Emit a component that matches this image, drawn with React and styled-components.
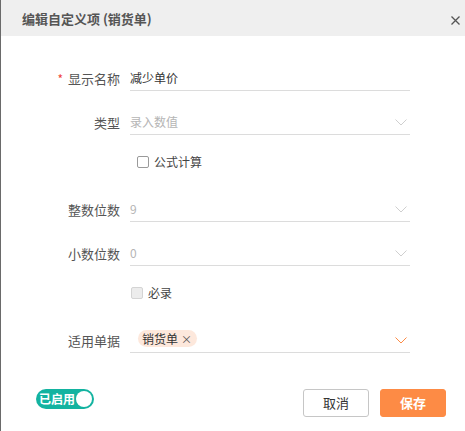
import React from 'react';
import styled, { createGlobalStyle } from 'styled-components';

const GlobalStyle = createGlobalStyle`
  html, body {
    margin: 0;
    padding: 0;
    background: #fff;
  }
  body {
    font-family: "Noto Sans CJK SC", "Noto Sans", sans-serif;
  }
`;

const Dialog = styled.div`
  width: 465px;
  height: 431px;
  box-sizing: border-box;
  border-left: 1px solid #6a6a6a;
  display: flex;
  flex-direction: column;
  background: #fff;
`;

const Header = styled.div`
  height: 36px;
  flex: none;
  display: flex;
  align-items: center;
  justify-content: space-between;
  padding: 0 5px 0 21px;
  background: #efefef;
`;

const Title = styled.div`
  font-size: 13px;
  font-weight: 700;
  color: #555;
  line-height: 18px;
  padding-top: 2px;
`;

const Close = styled.button`
  border: 0;
  background: none;
  padding: 0;
  width: 9px;
  height: 9px;
  display: flex;
  margin-top: 4px;
  cursor: pointer;
`;

const Form = styled.div`
  display: flex;
  flex-direction: column;
  gap: 20px;
  padding: 30px 0 37px;
`;

const Row = styled.div`
  display: grid;
  grid-template-columns: 119px 280px;
  column-gap: 10px;
  align-items: center;
  height: 24px;
`;

const Label = styled.div`
  text-align: right;
  font-size: 13px;
  color: #555;
  line-height: 24px;
  padding-top: 1px;
`;

const Required = styled.span`
  color: #f0443a;
  font-size: 12px;
  margin-right: 5px;
`;

const Field = styled.div`
  height: 24px;
  box-sizing: border-box;
  border-bottom: 1px solid #dcdcdc;
  display: flex;
  align-items: center;
  justify-content: space-between;
  font-size: 12px;
  line-height: 16px;
  color: ${p => (p.muted ? '#b5b5b5' : '#333')};
  padding-right: 3px;
`;

const CheckRow = styled.label`
  display: flex;
  align-items: center;
  gap: 5px;
  height: 16px;
  line-height: 16px;
  margin-bottom: 7px;
  padding-left: ${p => p.indent}px;
  font-size: 12px;
  color: #444;
`;

const Box = styled.span`
  flex: none;
  width: 12px;
  height: 12px;
  box-sizing: border-box;
  border-radius: 2px;
  border: 1px solid ${p => (p.disabled ? '#d4d4d4' : '#9a9a9a')};
  background: ${p => (p.disabled ? '#ececec' : '#fff')};
`;

const Tag = styled.span`
  display: inline-flex;
  align-items: center;
  gap: 3px;
  height: 17px;
  padding: 0 5px 0 4px;
  margin: 0 0 3px 8px;
  border-radius: 9px;
  background: #fde8dc;
  color: #333;
  font-size: 12px;
`;

const TagX = styled.span`
  font-size: 11px;
  color: #555;
`;

const Footer = styled.div`
  display: flex;
  justify-content: space-between;
  align-items: flex-start;
  padding: 0 19px 0 35px;
`;

const Toggle = styled.div`
  width: 58px;
  height: 20px;
  box-sizing: border-box;
  border-radius: 10px;
  background: #13b3a0;
  display: flex;
  align-items: center;
  justify-content: space-between;
  padding: 0 2px 0 3px;
  color: #fff;
  font-size: 12px;
  line-height: 16px;
  font-weight: 700;
`;

const Knob = styled.span`
  width: 16px;
  height: 16px;
  border-radius: 50%;
  background: #fff;
`;

const Buttons = styled.div`
  display: flex;
  gap: 11px;
`;

const Button = styled.button`
  width: 66px;
  height: 28px;
  box-sizing: border-box;
  border-radius: 3px;
  font-family: inherit;
  font-size: 13px;
  line-height: 18px;
  padding: 0;
  cursor: pointer;
  border: 1px solid ${p => (p.primary ? '#fd8b45' : '#c6c6c6')};
  background: ${p => (p.primary ? '#fd8b45' : '#fff')};
  color: ${p => (p.primary ? '#fff' : '#333')};
  font-weight: ${p => (p.primary ? 700 : 400)};
`;

const Chevron = ({ color = '#cfcfcf' }) => (
  <svg width="12" height="7" viewBox="0 0 12 7">
    <polyline points="0.5,0.5 6,6 11.5,0.5" fill="none" stroke={color} strokeWidth="1" />
  </svg>
);

const rows = [
  { label: '整数位数', value: '9' },
  { label: '小数位数', value: '0' },
];

export default function App() {
  return (
    <>
      <GlobalStyle />
      <Dialog>
        <Header>
          <Title>编辑自定义项 (销货单)</Title>
          <Close aria-label="close">
            <svg width="9" height="9" viewBox="0 0 9 9">
              <path d="M0.5 0.5L8.5 8.5M8.5 0.5L0.5 8.5" stroke="#555" strokeWidth="1.3" />
            </svg>
          </Close>
        </Header>

        <Form>
          <Row>
            <Label><Required>*</Required>显示名称</Label>
            <Field>减少单价</Field>
          </Row>
          <Row>
            <Label>类型</Label>
            <Field muted>录入数值<Chevron /></Field>
          </Row>
          <CheckRow indent={136}><Box />公式计算</CheckRow>
          {rows.map(r => (
            <Row key={r.label}>
              <Label>{r.label}</Label>
              <Field muted>{r.value}<Chevron /></Field>
            </Row>
          ))}
          <CheckRow indent={130}><Box disabled />必录</CheckRow>
          <Row>
            <Label>适用单据</Label>
            <Field>
              <Tag>销货单<TagX>×</TagX></Tag>
              <Chevron color="#fd8b45" />
            </Field>
          </Row>
        </Form>

        <Footer>
          <Toggle>已启用<Knob /></Toggle>
          <Buttons>
            <Button>取消</Button>
            <Button primary>保存</Button>
          </Buttons>
        </Footer>
      </Dialog>
    </>
  );
}
